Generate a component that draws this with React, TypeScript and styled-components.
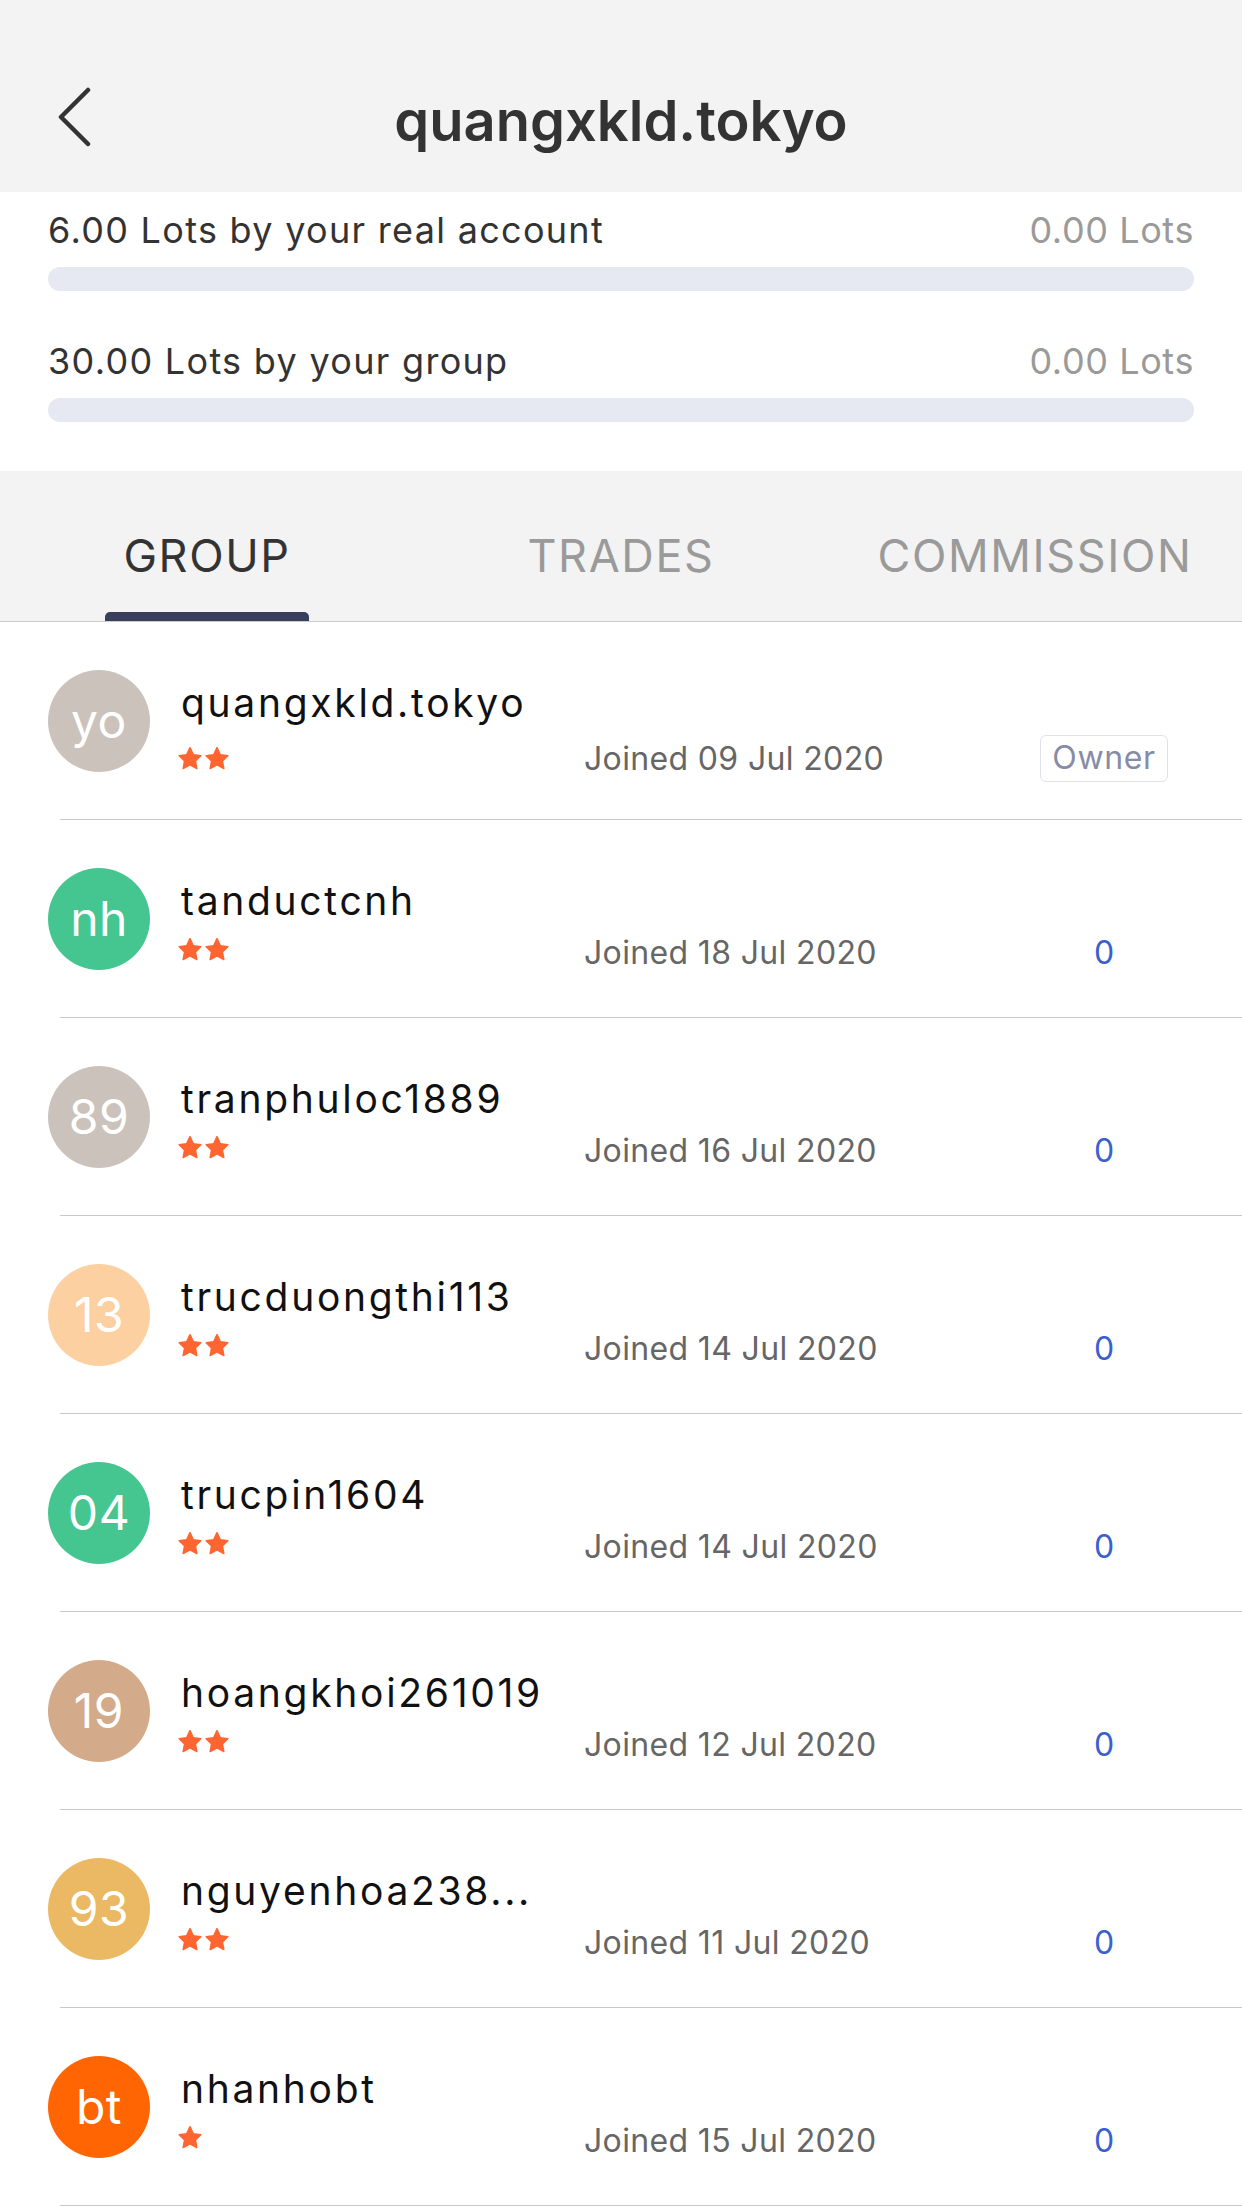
import React from 'react'
import styled, { createGlobalStyle } from 'styled-components'

const GlobalStyle = createGlobalStyle`
  html, body {
    margin: 0;
    padding: 0;
    background: #ffffff;
  }
  body {
    font-family: Inter, 'Noto Sans', 'Liberation Sans', sans-serif;
    -webkit-font-smoothing: antialiased;
  }
`

interface Member {
  initials: string
  avatar: string
  name: string
  stars: number
  joined: string
  owner?: boolean
  trades?: number
}

const members: Member[] = [
  { initials: 'yo', avatar: '#cbc3bb', name: 'quangxkld.tokyo', stars: 2, joined: '09 Jul 2020', owner: true },
  { initials: 'nh', avatar: '#45c690', name: 'tanductcnh', stars: 2, joined: '18 Jul 2020', trades: 0 },
  { initials: '89', avatar: '#cbc3bb', name: 'tranphuloc1889', stars: 2, joined: '16 Jul 2020', trades: 0 },
  { initials: '13', avatar: '#fcd0a1', name: 'trucduongthi113', stars: 2, joined: '14 Jul 2020', trades: 0 },
  { initials: '04', avatar: '#45c690', name: 'trucpin1604', stars: 2, joined: '14 Jul 2020', trades: 0 },
  { initials: '19', avatar: '#d3aa8a', name: 'hoangkhoi261019', stars: 2, joined: '12 Jul 2020', trades: 0 },
  { initials: '93', avatar: '#ebb864', name: 'nguyenhoa2381993', stars: 2, joined: '11 Jul 2020', trades: 0 },
  { initials: 'bt', avatar: '#ff6503', name: 'nhanhobt', stars: 1, joined: '15 Jul 2020', trades: 0 },
]

const tabs = ['GROUP', 'TRADES', 'COMMISSION']

// long usernames are cut the way the app does it
const shortName = (name: string) => (name.length > 15 ? `${name.slice(0, 12)}...` : name)

const Page = styled.div`
  width: 1242px;
  min-height: 2208px;
  background: #ffffff;
  overflow: hidden;
`

const Header = styled.header`
  height: 142px;
  padding-top: 50px;
  background: #f3f3f3;
  display: grid;
  grid-template-columns: 160px 1fr 160px;
  align-items: center;
`

const BackButton = styled.button`
  border: 0;
  background: none;
  padding: 0 0 0 56px;
  margin-top: -9px;
  display: flex;
  align-items: center;
  justify-self: start;
`

const Title = styled.h1`
  margin: 0;
  text-align: center;
  font-size: 56px;
  font-weight: 600;
  color: #333333;
`

const Progress = styled.section`
  padding: 16px 48px 49px;
  display: flex;
  flex-direction: column;
  gap: 48px;
`

const ProgressItem = styled.div`
  display: flex;
  flex-direction: column;
  gap: 15px;
`

const ProgressLabels = styled.div`
  display: flex;
  justify-content: space-between;
  font-size: 36px;
  line-height: 44px;
  letter-spacing: 1.3px;
`

const LotsText = styled.span<{ $muted?: boolean }>`
  color: ${p => (p.$muted ? '#9a9a9a' : '#333333')};
  letter-spacing: ${p => (p.$muted ? '0.6px' : 'inherit')};
`

const Track = styled.div`
  height: 24px;
  border-radius: 12px;
  background: #e6e8f2;
`

const TabBar = styled.nav`
  height: 150px;
  background: #f3f3f3;
  border-bottom: 1px solid #cccccc;
  display: grid;
  grid-template-columns: repeat(3, 1fr);
`

const Tab = styled.div<{ $active?: boolean }>`
  display: flex;
  flex-direction: column;
  align-items: center;
  justify-content: flex-end;
  color: ${p => (p.$active ? '#333333' : '#9a9a9a')};
`

const TabLabel = styled.span`
  font-size: 45px;
  line-height: 56px;
  letter-spacing: 1.6px;
  margin-bottom: 28px;
`

const Indicator = styled.span<{ $active?: boolean }>`
  width: 204px;
  height: 9px;
  border-radius: 5px 5px 0 0;
  background: ${p => (p.$active ? '#373f5c' : 'transparent')};
`

const Row = styled.div`
  height: 197px;
  padding-left: 48px;
  display: grid;
  grid-template-columns: 102px 1fr;
  column-gap: 31px;
  align-items: center;
`

const Divider = styled.div`
  height: 1px;
  margin-left: 60px;
  background: #c9c9c9;
`

const Avatar = styled.div<{ $bg: string }>`
  width: 102px;
  height: 102px;
  border-radius: 50%;
  background: ${p => p.$bg};
  color: #ffffff;
  font-size: 48px;
  display: flex;
  align-items: center;
  justify-content: center;
  letter-spacing: 0.5px;
`

const Body = styled.div`
  align-self: start;
  padding-top: 57px;
  display: flex;
  flex-direction: column;
  gap: 8px;
`

const Name = styled.div`
  font-size: 39px;
  line-height: 48px;
  color: #111111;
  letter-spacing: 2.7px;
  white-space: nowrap;
`

const Meta = styled.div`
  display: grid;
  grid-template-columns: 403px 1fr 150px;
  align-items: center;
  height: 40px;
  padding-right: 63px;
`

const Stars = styled.div`
  display: flex;
  gap: 1px;
  margin-left: -4px;
  align-self: end;
  padding-bottom: 11px;
`

const Joined = styled.span`
  font-size: 32px;
  line-height: 40px;
  color: #666666;
  letter-spacing: 0.35px;
`

const Trades = styled.span`
  justify-self: center;
  font-size: 32px;
  line-height: 40px;
  color: #3c5fcf;
`

const OwnerBadge = styled.span`
  justify-self: center;
  box-sizing: border-box;
  height: 47px;
  padding: 0 11px;
  border: 1.5px solid #dfe2ec;
  border-radius: 6px;
  font-size: 32px;
  line-height: 44px;
  color: #878ca6;
  letter-spacing: 0.6px;
`

const StarIcon = () => (
  <svg width="26" height="25" viewBox="0 0 24 23">
    <polygon
      points="12,1.5 15.1,8 22,8.9 17,13.7 18.3,20.8 12,17.4 5.7,20.8 7,13.7 2,8.9 8.9,8"
      fill="#ff6530"
      stroke="#ff6530"
      strokeWidth="1.4"
      strokeLinejoin="round"
    />
  </svg>
)

const BackIcon = () => (
  <svg width="40" height="60" viewBox="0 0 40 60">
    <polyline
      points="32,3 5,30 32,57"
      fill="none"
      stroke="#333333"
      strokeWidth="4.5"
      strokeLinecap="round"
      strokeLinejoin="round"
    />
  </svg>
)

const MemberRow = ({ m }: { m: Member }) => (
  <>
    <Row>
      <Avatar $bg={m.avatar}>{m.initials}</Avatar>
      <Body>
        <Name title={m.name}>{shortName(m.name)}</Name>
        <Meta>
          <Stars>
            {Array.from({ length: m.stars }).map((_, i) => (
              <StarIcon key={i} />
            ))}
          </Stars>
          <Joined>Joined {m.joined}</Joined>
          {m.owner ? <OwnerBadge>Owner</OwnerBadge> : <Trades>{m.trades}</Trades>}
        </Meta>
      </Body>
    </Row>
    <Divider />
  </>
)

export default function App() {
  return (
    <Page>
      <GlobalStyle />
      <Header>
        <BackButton aria-label="Back">
          <BackIcon />
        </BackButton>
        <Title>quangxkld.tokyo</Title>
        <span />
      </Header>

      <Progress>
        <ProgressItem>
          <ProgressLabels>
            <LotsText>6.00 Lots by your real account</LotsText>
            <LotsText $muted>0.00 Lots</LotsText>
          </ProgressLabels>
          <Track />
        </ProgressItem>
        <ProgressItem>
          <ProgressLabels>
            <LotsText>30.00 Lots by your group</LotsText>
            <LotsText $muted>0.00 Lots</LotsText>
          </ProgressLabels>
          <Track />
        </ProgressItem>
      </Progress>

      <TabBar>
        {tabs.map((t, i) => (
          <Tab key={t} $active={i === 0}>
            <TabLabel>{t}</TabLabel>
            <Indicator $active={i === 0} />
          </Tab>
        ))}
      </TabBar>

      {members.map(m => (
        <MemberRow key={m.name} m={m} />
      ))}
    </Page>
  )
}
